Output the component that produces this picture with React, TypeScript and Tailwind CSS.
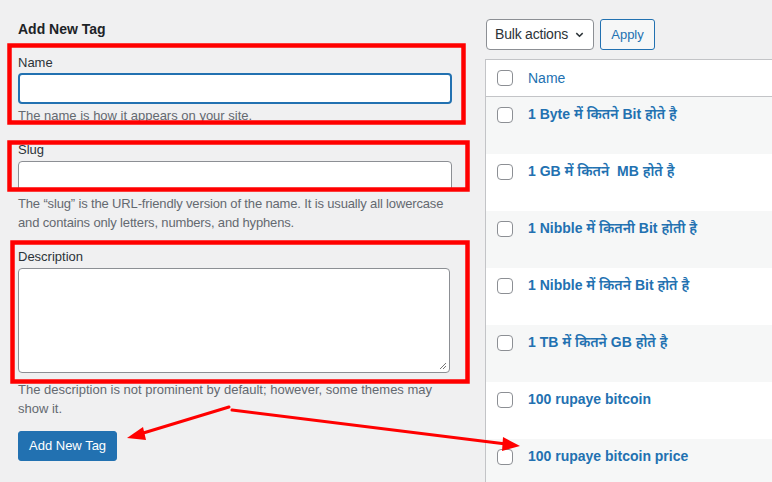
import React from 'react'

const tags = [
  '1 Byte में कितने Bit होते है',
  '1 GB में कितने  MB होते है',
  '1 Nibble में कितनी Bit होती है',
  '1 Nibble में कितने Bit होते है',
  '1 TB में कितने GB होते है',
  '100 rupaye bitcoin',
  '100 rupaye bitcoin price',
]

function Checkbox() {
  return <span className="block w-4 h-4 shrink-0 rounded-[4px] border border-[#8c8f94] bg-white" />
}

function Annotations() {
  return (
    <svg className="absolute inset-0 pointer-events-none" width="772" height="482" viewBox="0 0 772 482">
      <g fill="none" stroke="#ff0000" strokeWidth="4.5">
        <rect x="9.5" y="45.5" width="454" height="77" />
        <rect x="9.5" y="142.5" width="458" height="47" />
        <rect x="12.5" y="242.5" width="455" height="139" />
      </g>
      <g stroke="#ff0000" strokeWidth="3" strokeLinecap="round">
        <line x1="229" y1="407" x2="140" y2="434" />
        <line x1="232" y1="410" x2="506" y2="444" />
      </g>
      <g fill="#ff0000">
        <polygon points="127,438 143,427 146,440" />
        <polygon points="520,446 503,437 502,451" />
      </g>
    </svg>
  )
}

export default function App() {
  return (
    <div
      className="relative w-[772px] h-[482px] overflow-hidden bg-[#f0f0f1] text-[#1d2327]"
      style={{ fontFamily: '"Segoe UI", "Liberation Sans", "Noto Sans", sans-serif' }}
    >
      <div className="flex pl-[18px]">
        {/* form column */}
        <div className="w-[434px] shrink-0">
          <h2 className="pt-[19px] text-[14px] leading-[20px] font-semibold">Add New Tag</h2>

          <div className="mt-[15px]">
            <label className="block text-[13px] leading-[18px] text-[#2c3338]">Name</label>
            <div className="mt-[1px] h-[31px] rounded-[4px] border-2 border-[#2271b1] bg-white" />
            <p className="mt-[2px] text-[13px] leading-[19px] text-[#646970]">The name is how it appears on your site.</p>
          </div>

          <div className="mt-[16px]">
            <label className="block text-[13px] leading-[18px] text-[#2c3338]">Slug</label>
            <div className="mt-[2px] h-[30px] rounded-[4px] border border-[#8c8f94] bg-white" />
            <p className="mt-[3px] text-[13px] leading-[19px] text-[#646970] whitespace-nowrap tracking-[-0.15px]">
              The “slug” is the URL-friendly version of the name. It is usually all lowercase
              <br />
              and contains only letters, numbers, and hyphens.
            </p>
          </div>

          <div className="mt-[16px]">
            <label className="block text-[13px] leading-[18px] text-[#2c3338]">Description</label>
            <div className="relative mt-[2px] h-[105px] w-[432px] rounded-[4px] border border-[#8c8f94] bg-white">
              <svg className="absolute right-[2px] bottom-[2px]" width="8" height="8" viewBox="0 0 8 8">
                <path d="M1 7 L7 1 M4 7 L7 4" stroke="#777" strokeWidth="1" />
              </svg>
            </div>
            <p className="mt-[7px] text-[13px] leading-[19px] text-[#646970] whitespace-nowrap">
              The description is not prominent by default; however, some themes may
              <br />
              show it.
            </p>
          </div>

          <button className="mt-[13px] h-[30px] px-[10px] rounded-[3px] bg-[#2271b1] text-white text-[13px] border border-[#2271b1]">
            Add New Tag
          </button>
        </div>

        {/* list column */}
        <div className="ml-[33px] flex-1">
          <div className="pt-[19px] flex items-center gap-[6px] pl-[1px]">
            <div className="h-[31px] w-[108px] rounded-[4px] border border-[#8c8f94] bg-white flex items-center justify-between pl-[8px] pr-[8px] text-[14px] text-[#2c3338]">
              <span className="tracking-[-0.2px]">Bulk actions</span>
              <svg width="11" height="11" viewBox="0 0 12 12">
                <path d="M2.5 4.5 L6 8 L9.5 4.5" fill="none" stroke="#2c3338" strokeWidth="1.6" />
              </svg>
            </div>
            <div className="h-[31px] w-[55px] rounded-[3px] border border-[#2271b1] bg-[#f6f7f7] flex items-center justify-center text-[13px] text-[#2271b1]">
              Apply
            </div>
          </div>

          <div className="mt-[9px] border-l border-t border-[#c3c4c7]">
            <div className="h-[37px] bg-white border-b border-[#c3c4c7] flex items-center pl-[11px] gap-[15px]">
              <Checkbox />
              <span className="text-[14px] text-[#2271b1]">Name</span>
            </div>
            {tags.map((t, i) => (
              <div
                key={t}
                className={`h-[57px] flex items-start pt-[10px] pl-[11px] gap-[15px] ${i % 2 === 0 ? 'bg-[#f6f7f7]' : 'bg-white'}`}
              >
                <Checkbox />
                <span className="text-[14px] leading-[17px] font-semibold text-[#2271b1] -mt-[1px] whitespace-pre">{t}</span>
              </div>
            ))}
          </div>
        </div>
      </div>

      <Annotations />
    </div>
  )
}
